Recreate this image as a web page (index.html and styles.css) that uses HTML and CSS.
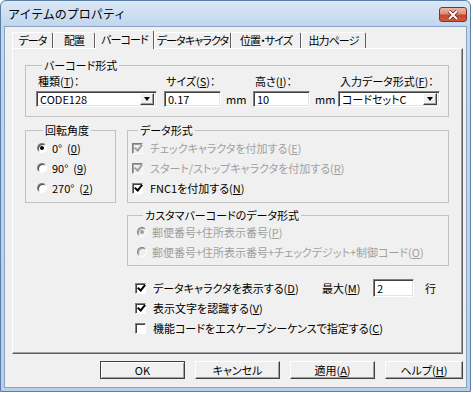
FILE: index.html
```html
<!DOCTYPE html>
<html lang="ja">
<head>
    <meta charset="UTF-8">
    <title>アイテムのプロパティ</title>
    <link rel="stylesheet" href="styles.css">
</head>
<body>
    <div class="window">
        <div class="titlebar">
            <span class="title">アイテムのプロパティ</span>
            <div class="close">
                <svg width="12" height="10" viewBox="0 0 12 10">
                    <path d="M2 1 L10 9 M10 1 L2 9" stroke="#6b2418" stroke-width="3.6"/>
                    <path d="M2 1 L10 9 M10 1 L2 9" stroke="#fff" stroke-width="2"/>
                </svg>
            </div>
        </div>

        <div class="client">
            <div class="tabs">
                <span class="tab">データ</span>
                <span class="tab">配置</span>
                <span class="tab active">バーコード</span>
                <span class="tab">データキャラクタ</span>
                <span class="tab">位置・サイズ</span>
                <span class="tab">出力ページ</span>
            </div>

            <div class="panel">
                <fieldset class="group group-format">
                    <legend>バーコード形式</legend>
                    <div class="fields">
                        <div class="field field-type">
                            <label>種類(<u>T</u>)：</label>
                            <div class="combo combo-type">
                                <span class="combo-text">CODE128</span>
                                <span class="drop"></span>
                            </div>
                        </div>
                        <div class="field field-size">
                            <label>サイズ(<u>S</u>)：</label>
                            <div class="ctl-row">
                                <div class="textbox tb-mm">0.17</div>
                                <span>mm</span>
                            </div>
                        </div>
                        <div class="field field-height">
                            <label>高さ(<u>I</u>)：</label>
                            <div class="ctl-row">
                                <div class="textbox tb-mm">10</div>
                                <span>mm</span>
                            </div>
                        </div>
                        <div class="field field-input">
                            <label>入力データ形式(<u>F</u>)：</label>
                            <div class="combo combo-input">
                                <span class="combo-text">コードセットC</span>
                                <span class="drop"></span>
                            </div>
                        </div>
                    </div>
                </fieldset>

                <div class="row2">
                    <fieldset class="group group-angle">
                        <legend>回転角度</legend>
                        <div class="opt"><span class="rb on"></span><span>0°&nbsp;&nbsp;(<u>0</u>)</span></div>
                        <div class="opt"><span class="rb"></span><span>90°&nbsp;&nbsp;(<u>9</u>)</span></div>
                        <div class="opt"><span class="rb"></span><span>270°&nbsp;&nbsp;(<u>2</u>)</span></div>
                    </fieldset>

                    <fieldset class="group group-data">
                        <legend>データ形式</legend>
                        <div class="opt disabled"><span class="cb on"></span><span>チェックキャラクタを付加する(<u>E</u>)</span></div>
                        <div class="opt disabled"><span class="cb on"></span><span>スタート/ストップキャラクタを付加する(<u>R</u>)</span></div>
                        <div class="opt"><span class="cb on"></span><span>FNC1を付加する(<u>N</u>)</span></div>
                    </fieldset>
                </div>

                <fieldset class="group group-custom">
                    <legend>カスタマバーコードのデータ形式</legend>
                    <div class="opt disabled"><span class="rb on"></span><span>郵便番号+住所表示番号(<u>P</u>)</span></div>
                    <div class="opt disabled"><span class="rb"></span><span>郵便番号+住所表示番号+チェックデジット+制御コード(<u>O</u>)</span></div>
                </fieldset>

                <div class="options">
                    <div class="opt">
                        <div class="opt-main"><span class="cb on"></span><span>データキャラクタを表示する(<u>D</u>)</span></div>
                        <span class="max-label">最大(<u>M</u>)</span>
                        <div class="textbox tb-lines">2</div>
                        <span class="unit">行</span>
                    </div>
                    <div class="opt"><span class="cb on"></span><span>表示文字を認識する(<u>V</u>)</span></div>
                    <div class="opt"><span class="cb"></span><span>機能コードをエスケープシーケンスで指定する(<u>C</u>)</span></div>
                </div>
            </div>

            <div class="buttons">
                <div class="btn default">OK</div>
                <div class="btn">キャンセル</div>
                <div class="btn">適用(<u>A</u>)</div>
                <div class="btn btn-help">ヘルプ(<u>H</u>)</div>
            </div>
        </div>
    </div>
</body>
</html>
```

FILE: styles.css
```css
* {
    margin: 0;
    padding: 0;
    box-sizing: border-box;
}

body {
    background: #fff;
    font-family: "Noto Sans CJK JP", sans-serif;
    font-size: 11px;
    font-feature-settings: "palt";
    color: #000;
}

u {
    text-decoration-thickness: 1px;
    text-underline-offset: 1px;
}

/* window frame */

.window {
    width: 471px;
    height: 392px;
    border: 1px solid #5a7ea6;
    border-radius: 6px 6px 0 0;
    background: linear-gradient(to bottom, #dbe8f6 0, #c2d7ee 24px, #b6d0ec 100%);
    padding: 0 3px 3px;
    display: flex;
    flex-direction: column;
}

.titlebar {
    height: 25px;
    display: flex;
    justify-content: space-between;
    align-items: flex-start;
    padding-left: 4px;
}

.title {
    font-size: 12px;
    font-feature-settings: normal;
    line-height: 14px;
    margin-top: 6px;
}

.close {
    width: 28px;
    height: 15px;
    margin-top: 6px;
    border: 1px solid #7d3326;
    border-radius: 3px;
    background: linear-gradient(to bottom, #ebb7a9 0%, #df8e78 45%, #c8462d 55%, #d35a3f 100%);
    display: flex;
    align-items: center;
    justify-content: center;
}

.client {
    flex: 1;
    background: #f0f0f0;
    border: 1px solid #8aa3c2;
    padding: 3px 3px 0 7px;
}

/* tabs */

.tabs {
    display: flex;
    align-items: flex-end;
    height: 18px;
    position: relative;
    z-index: 1;
}

.tab {
    height: 16px;
    display: flex;
    align-items: center;
    justify-content: center;
    white-space: nowrap;
    letter-spacing: -0.9px;
    border-top: 1px solid #fff;
    border-left: 1px solid #fff;
    border-right: 1px solid #5f5f5f;
    border-radius: 2px 2px 0 0;
    line-height: 13px;
}

.tab:nth-child(1) { width: 41px; }
.tab:nth-child(2) { width: 42px; }
.tab:nth-child(3) { width: 59px; }
.tab:nth-child(4) { width: 77px; }
.tab:nth-child(5) { width: 70px; }
.tab:nth-child(6) { width: 65px; }

.tab.active {
    height: 19px;
    margin-bottom: -1px;
    background: #f0f0f0;
    padding-bottom: 2px;
}

.panel {
    height: 306px;
    border: 1px solid;
    border-color: #fff #5f5f5f #5f5f5f #fff;
    box-shadow: inset -1px -1px 0 #a0a0a0;
    padding: 10px 0 0 12px;
}

/* group boxes */

.group {
    border: 1px solid #c2c2c2;
    min-width: 0;
}

.group legend {
    margin-left: 6px;
    padding: 0 2px;
    line-height: 13px;
}

.group-format {
    width: 424px;
    padding: 3px 0 9px 10px;
}

.fields {
    display: flex;
    align-items: flex-start;
}

.field {
    display: flex;
    flex-direction: column;
    gap: 3px;
}

.field label {
    line-height: 13px;
    padding-left: 2px;
    white-space: nowrap;
}

.field-type { width: 128px; }
.field-size { width: 89px; }
.field-height { width: 85px; }
.field-input { width: 102px; }

.ctl-row {
    display: flex;
    align-items: center;
    gap: 5px;
}

.textbox,
.combo {
    height: 16px;
    background: #fff;
    border: 1px solid;
    border-color: #808080 #fff #fff #808080;
    box-shadow: inset 1px 1px 0 #404040, inset -1px -1px 0 #e3e3e3;
    line-height: 13px;
    padding: 1px 0 0 3px;
}

.tb-mm { width: 57px; }

.combo {
    display: flex;
    justify-content: space-between;
    padding: 2px 2px 2px 3px;
}

.combo-type { width: 121px; }
.combo-input { width: 102px; }

.combo-text {
    line-height: 11px;
}

.drop {
    width: 14px;
    height: 12px;
    margin-top: -1px;
    background: #f0f0f0;
    border: 1px solid;
    border-color: #fff #404040 #404040 #fff;
    box-shadow: inset -1px -1px 0 #a0a0a0;
    display: flex;
    align-items: center;
    justify-content: center;
}

.drop::after {
    content: '';
    border-left: 3.5px solid transparent;
    border-right: 3.5px solid transparent;
    border-top: 4px solid #000;
}

.row2 {
    display: flex;
    gap: 11px;
    margin-top: 7px;
}

.group-angle {
    width: 91px;
    padding: 1px 0 4px 11px;
}

.group-data {
    width: 322px;
    padding: 1px 0 4px 4px;
}

.group-custom {
    width: 322px;
    margin: 6px 0 0 102px;
    padding: 0 0 3px 9px;
}

/* options */

.opt {
    height: 20px;
    display: flex;
    align-items: center;
    gap: 5px;
    line-height: 13px;
    white-space: nowrap;
}

.opt.disabled {
    color: #a0a0a0;
}

.cb {
    width: 11px;
    height: 11px;
    flex: none;
    margin-right: 2px;
    background: #fff;
    border: 1px solid;
    border-color: #808080 #fff #fff #808080;
    box-shadow: inset 1px 1px 0 #404040;
    display: flex;
    align-items: center;
    justify-content: center;
}

.cb.on::after {
    content: '';
    width: 3px;
    height: 6px;
    margin: -2px 0 0 1px;
    border: solid #000;
    border-width: 0 2px 2px 0;
    transform: rotate(40deg);
}

.disabled .cb {
    background: #f0f0f0;
    box-shadow: inset 1px 1px 0 #a0a0a0;
}

.disabled .cb.on::after {
    border-color: #a0a0a0;
}

.rb {
    width: 10px;
    height: 10px;
    flex: none;
    border-radius: 50%;
    background: #fff;
    border: 1px solid;
    border-color: #808080 #fff #fff #808080;
    box-shadow: inset 1px 1px 0 #404040;
    display: flex;
    align-items: center;
    justify-content: center;
}

.rb.on::after {
    content: '';
    width: 4px;
    height: 4px;
    border-radius: 50%;
    background: #000;
}

.disabled .rb {
    background: #f0f0f0;
    box-shadow: inset 1px 1px 0 #a0a0a0;
}

.disabled .rb.on::after {
    background: #a0a0a0;
}

.options {
    margin: 12px 0 0 110px;
}

.opt-main {
    width: 182px;
    display: flex;
    align-items: center;
    gap: 5px;
}

.max-label {
    width: 51px;
}

.tb-lines {
    width: 41px;
    height: 18px;
    line-height: 15px;
    margin-left: -5px;
}

.unit {
    margin-left: 6px;
}

/* dialog buttons */

.buttons {
    display: flex;
    justify-content: flex-end;
    gap: 10px;
    margin-top: 7px;
}

.btn {
    width: 85px;
    height: 18px;
    display: flex;
    align-items: center;
    justify-content: center;
    line-height: 13px;
    background: #f0f0f0;
    border: 1px solid;
    border-color: #fff #404040 #404040 #fff;
    box-shadow: inset -1px -1px 0 #a0a0a0;
}

.btn.default {
    border-color: #404040;
    box-shadow: inset 1px 1px 0 #fff, inset -1px -1px 0 #a0a0a0;
}

.btn-help {
    width: 78px;
}
```
